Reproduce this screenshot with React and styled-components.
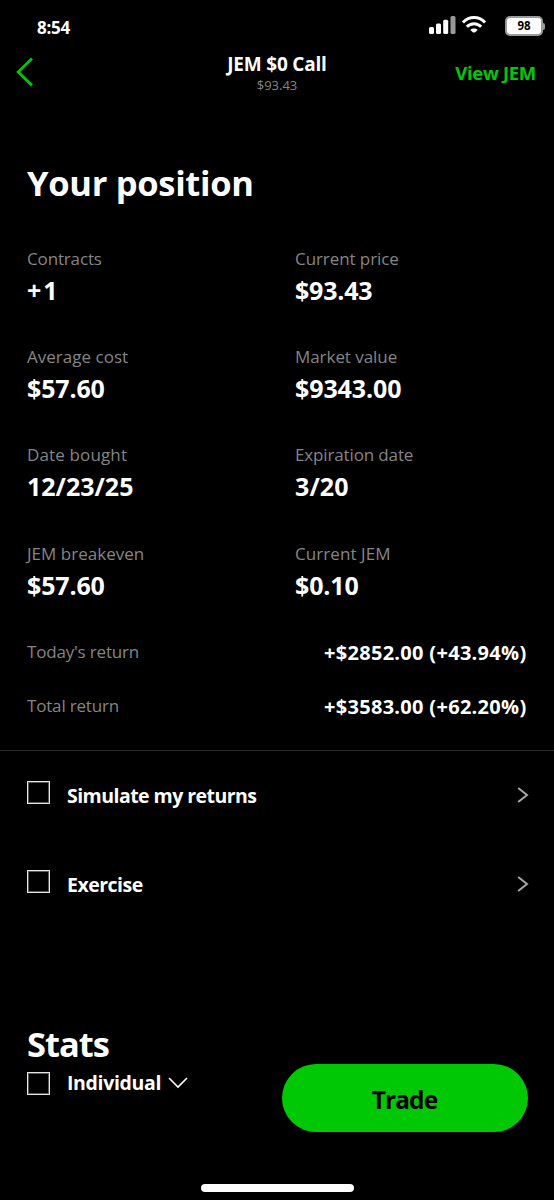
import React from 'react';
import styled, { createGlobalStyle } from 'styled-components';

const GlobalStyle = createGlobalStyle`
    * {
        box-sizing: border-box;
    }

    body {
        margin: 0;
        background-color: #000000;
    }
`;

const Screen = styled.div`
    display: flex;
    flex-direction: column;
    width: 554px;
    height: 1200px;
    overflow: hidden;
    background-color: #000000;
    color: #FFFFFF;
    font-family: "Open Sans", "Noto Sans", sans-serif;
    font-weight: 700;
    white-space: nowrap;
`;

const StatusBar = styled.div`
    display: flex;
    align-items: center;
    height: 52px;
    padding: 2px 9px 0px 37px;
`;

const Time = styled.span`
    flex: 1;
    padding-top: 1px;
    font-size: 17px;
    letter-spacing: -0.25px;
`;

const StatusIcon = styled.svg`
    display: block;
    margin-right: ${props => props.$gap || 0}px;
    margin-top: ${props => props.$drop || 0}px;
`;

const Battery = styled.div`
    display: flex;
    align-items: center;
    margin-bottom: 2px;
`;

const BatteryBody = styled.div`
    width: 38px;
    height: 20px;
    border: 2px solid #9A9A9A;
    border-radius: 5px;
    background-color: #FFFFFF;
    color: #000000;
    font-size: 11.5px;
    line-height: 16px;
    text-align: center;
`;

const BatteryTip = styled.div`
    width: 2px;
    height: 7px;
    border-radius: 0px 2px 2px 0px;
    background-color: #9A9A9A;
`;

const Header = styled.header`
    display: grid;
    grid-template-columns: 1fr auto 1fr;
    align-items: center;
    height: 44px;
    padding: 0px 18px 0px 15px;
`;

const BackIcon = styled.svg`
    display: block;
    margin-bottom: 4px;
`;

const Title = styled.div`
    padding-left: 3px;
    text-align: center;
`;

const TitleText = styled.div`
    font-size: 19px;
    line-height: 24px;
    letter-spacing: -0.2px;
`;

const TitlePrice = styled.div`
    color: #858585;
    font-size: 13px;
    font-weight: 400;
    line-height: 19px;
    padding-bottom: 1px;
`;

const HeaderLink = styled.div`
    justify-self: end;
    margin-bottom: 4px;
    color: #00C805;
    font-size: 18.5px;
    letter-spacing: -0.3px;
`;

const Position = styled.section`
    padding: 63px 27px 17px;
    border-bottom: 1px solid #2B2B2B;
`;

const Heading = styled.h1`
    margin: 0;
    font-size: 34.5px;
    font-weight: 700;
    line-height: 48px;
    letter-spacing: ${props => props.$track}px;
`;

const Grid = styled.div`
    display: grid;
    grid-template-columns: 268px 1fr;
    grid-auto-rows: 62px;
    row-gap: 36.2px;
    margin-top: 39px;
`;

const Label = styled.div`
    color: #858585;
    font-size: 17px;
    font-weight: 400;
    line-height: 26px;
    letter-spacing: ${props => props.$track}px;
`;

const Value = styled.div`
    font-size: 25px;
    line-height: 36px;
    letter-spacing: ${props => props.$track}px;
`;

const Returns = styled.div`
    padding-top: 23.1px;
`;

const ReturnRow = styled.div`
    display: flex;
    align-items: center;
    justify-content: space-between;
    height: 53.7px;

    ${Label} {
        padding-bottom: 1px;
    }
`;

const ReturnValue = styled.div`
    padding-right: 0.5px;
    font-size: 20px;
    letter-spacing: 0.3px;
`;

const ActionRow = styled.div`
    display: flex;
    align-items: center;
    height: 89.3px;
    padding: 0px 25px 0px 27px;
`;

const Box = styled.div`
    width: 23px;
    height: 23px;
    margin: 0px 17px ${props => props.$lift || 0}px 0px;
    border: 1px solid #E6E6E6;
    box-shadow: inset 0px 0px 0px 1px #5A5A5A;
`;

const ActionText = styled.div`
    flex: ${props => (props.$grow ? 1 : 'none')};
    padding-bottom: 1px;
    font-size: 19.5px;
    letter-spacing: ${props => props.$track}px;
`;

const ArrowIcon = styled.svg`
    display: block;
    margin-bottom: 2px;
`;

const Footer = styled.div`
    display: flex;
    justify-content: space-between;
    margin-top: 90.4px;
    padding: 0px 26px 0px 27px;
`;

const Account = styled.div`
    display: flex;
    align-items: center;
    height: 30px;
`;

const DownIcon = styled.svg`
    display: block;
    margin-left: 7px;
`;

const TradeButton = styled.button`
    width: 246px;
    height: 68px;
    margin-top: 44px;
    padding: 2px 1px 0px 0px;
    border: none;
    border-radius: 34px;
    background-color: #00C805;
    color: #000000;
    font-family: inherit;
    font-size: 24.5px;
    font-weight: 700;
    letter-spacing: -0.9px;
`;

const HomeBar = styled.div`
    width: 153px;
    height: 8px;
    margin: auto auto 8px;
    border-radius: 4px;
    background-color: #FFFFFF;
`;

const details = [
    { label: 'Contracts', value: '+1', labelTrack: -0.15, valueTrack: 2 },
    { label: 'Current price', value: '$93.43', labelTrack: -0.08, valueTrack: -0.2 },
    { label: 'Average cost', value: '$57.60', labelTrack: 0.02, valueTrack: -0.15 },
    { label: 'Market value', value: '$9343.00', labelTrack: -0.06, valueTrack: -0.1 },
    { label: 'Date bought', value: '12/23/25', labelTrack: 0.14, valueTrack: 0 },
    { label: 'Expiration date', value: '3/20', labelTrack: -0.14, valueTrack: 0.1 },
    { label: 'JEM breakeven', value: '$57.60', labelTrack: 0.02, valueTrack: -0.15 },
    { label: 'Current JEM', value: '$0.10', labelTrack: 0.08, valueTrack: -0.15 },
];

const returns = [
    { label: "Today's return", value: '+$2852.00 (+43.94%)' },
    { label: 'Total return', value: '+$3583.00 (+62.20%)' },
];

const actions = [
    { name: 'Simulate my returns', track: -0.54 },
    { name: 'Exercise', track: -0.5 },
];

const App = () => {
    return (
        <Screen>
            <GlobalStyle />
            <StatusBar>
                <Time>8:54</Time>
                <StatusIcon width="27" height="18" viewBox="0 0 27 18" $gap={6} $drop={-4}>
                    <rect x="0" y="11" width="5" height="7" rx="1.5" fill="#FFFFFF" />
                    <rect x="7" y="7.5" width="5" height="10.5" rx="1.5" fill="#FFFFFF" />
                    <rect x="14.2" y="3.7" width="5" height="14.3" rx="1.5" fill="#FFFFFF" />
                    <rect x="21.5" y="0" width="5" height="18" rx="1.5" fill="#999999" />
                </StatusIcon>
                <StatusIcon width="24" height="17" viewBox="0 0 24 17" $gap={19} $drop={-6}>
                    <g fill="none" stroke="#FFFFFF" strokeWidth="3">
                        <path d="M0.9 6.4 C7.2 -0.1 16.8 -0.1 23.1 6.4" />
                        <path d="M4.8 10.8 C9 6.7 15 6.7 19.2 10.8" />
                    </g>
                    <path d="M8.3 13.9 C10.4 12 13.6 12 15.7 13.9 L13.2 16.2 Q12 16.9 10.8 16.2 Z" fill="#FFFFFF" />
                </StatusIcon>
                <Battery>
                    <BatteryBody>98</BatteryBody>
                    <BatteryTip />
                </Battery>
            </StatusBar>
            <Header>
                <BackIcon width="20" height="30" viewBox="0 0 20 30">
                    <path d="M17 1.5 L3.2 15 L17 28.5" fill="none" stroke="#00C805" strokeWidth="2.8" />
                </BackIcon>
                <Title>
                    <TitleText>JEM $0 Call</TitleText>
                    <TitlePrice>$93.43</TitlePrice>
                </Title>
                <HeaderLink>View JEM</HeaderLink>
            </Header>
            <Position>
                <Heading $track={-0.3}>Your position</Heading>
                <Grid>
                    {
                        details.map(({ label, value, labelTrack, valueTrack }) =>
                            <div key={label}>
                                <Label $track={labelTrack}>{label}</Label>
                                <Value $track={valueTrack}>{value}</Value>
                            </div>
                        )
                    }
                </Grid>
                <Returns>
                    {
                        returns.map(({ label, value }) =>
                            <ReturnRow key={label}>
                                <Label $track={-0.18}>{label}</Label>
                                <ReturnValue>{value}</ReturnValue>
                            </ReturnRow>
                        )
                    }
                </Returns>
            </Position>
            {
                actions.map(({ name, track }) =>
                    <ActionRow key={name}>
                        <Box $lift={6} />
                        <ActionText $grow $track={track}>{name}</ActionText>
                        <ArrowIcon width="12" height="16" viewBox="0 0 12 16">
                            <path d="M1.2 1 L10 8 L1.2 15" fill="none" stroke="#A6A6A6" strokeWidth="2" />
                        </ArrowIcon>
                    </ActionRow>
                )
            }
            <Footer>
                <div>
                    <Heading as="h2" $track={-1}>Stats</Heading>
                    <Account>
                        <Box />
                        <ActionText $track={-0.35}>Individual</ActionText>
                        <DownIcon width="20" height="12" viewBox="0 0 20 12">
                            <path d="M1 1 L10 10 L19 1" fill="none" stroke="#FFFFFF" strokeWidth="1.6" />
                        </DownIcon>
                    </Account>
                </div>
                <TradeButton>Trade</TradeButton>
            </Footer>
            <HomeBar />
        </Screen>
    )
}

export default App;
